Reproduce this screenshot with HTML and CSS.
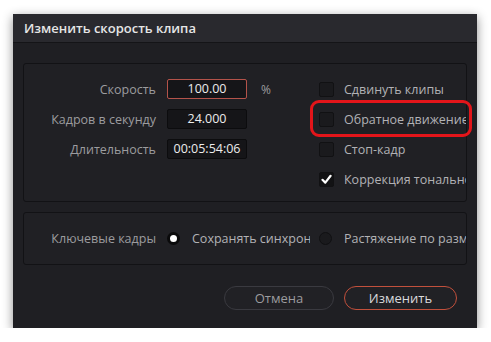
FILE: index.html
```html
<!DOCTYPE html>
<html lang="ru">
<head>
    <meta charset="UTF-8">
    <title>Изменить скорость клипа</title>
    <link rel="stylesheet" href="styles.css">
</head>
<body>
    <div class="dialog">
        <div class="titlebar">Изменить скорость клипа</div>

        <div class="content">
            <div class="panel speed-panel">
                <div class="fields">
                    <div class="field-row">
                        <span class="field-label">Скорость</span>
                        <span class="value-box active">100.00</span>
                        <span class="unit">%</span>
                    </div>
                    <div class="field-row">
                        <span class="field-label">Кадров в секунду</span>
                        <span class="value-box">24.000</span>
                    </div>
                    <div class="field-row">
                        <span class="field-label">Длительность</span>
                        <span class="value-box">00:05:54:06</span>
                    </div>
                </div>

                <div class="options">
                    <div class="check-row">
                        <span class="checkbox"></span>
                        <span class="check-label">Сдвинуть клипы</span>
                    </div>
                    <div class="check-row">
                        <span class="checkbox"></span>
                        <span class="check-label">Обратное движение</span>
                    </div>
                    <div class="check-row">
                        <span class="checkbox"></span>
                        <span class="check-label">Стоп-кадр</span>
                    </div>
                    <div class="check-row">
                        <span class="checkbox checked">
                            <svg width="11" height="11" viewBox="0 0 11 11"><path d="M1.5 5.8 L4.3 8.6 L9.6 1.8" fill="none" stroke="#fff" stroke-width="2.2" stroke-linecap="round" stroke-linejoin="round"/></svg>
                        </span>
                        <span class="check-label">Коррекция тональности</span>
                    </div>
                </div>
            </div>

            <div class="panel keyframe-panel">
                <span class="field-label">Ключевые кадры</span>
                <div class="radio-opt first">
                    <span class="radio selected"></span>
                    <span class="check-label">Сохранять синхронизацию</span>
                </div>
                <div class="radio-opt">
                    <span class="radio"></span>
                    <span class="check-label">Растяжение по размеру</span>
                </div>
            </div>

            <div class="actions">
                <button class="btn cancel">Отмена</button>
                <button class="btn confirm">Изменить</button>
            </div>
        </div>

        <div class="highlight"></div>
    </div>
</body>
</html>
```

FILE: styles.css
```css
body {
    margin: 0;
    padding: 14px 0 0 13px;
    background: #fff;
    font-family: "Open Sans", "Noto Sans", sans-serif;
}
.dialog {
    position: relative;
    width: 464px;
    height: 314px;
    background: #1f1f23;
    box-shadow: 0 3px 10px rgba(0,0,0,0.45);
}
.titlebar {
    height: 28px;
    line-height: 28px;
    padding-left: 11px;
    background: #29292e;
    border-bottom: 1px solid #141417;
    color: #e6e6e6;
    font-size: 13px;
    font-weight: 600;
}
.content {
    padding: 20px 10px 0 10px;
}
.panel {
    background: #202024;
    border: 1px solid #121215;
    border-radius: 3px;
    overflow: hidden;
    box-sizing: border-box;
}
.speed-panel {
    height: 139px;
    padding-top: 10px;
    display: flex;
}
.fields {
    width: 295px;
    flex-shrink: 0;
}
.field-row {
    height: 30px;
    display: flex;
    align-items: center;
}
.field-label {
    width: 132px;
    flex-shrink: 0;
    text-align: right;
    color: #9c9c9f;
    font-size: 12.5px;
}
.value-box {
    width: 80px;
    height: 20px;
    margin-left: 11px;
    box-sizing: border-box;
    background: #151518;
    border: 1px solid #0c0c0e;
    border-radius: 2px;
    color: #ececec;
    font-size: 12.5px;
    line-height: 18px;
    text-align: center;
}
.value-box.active {
    border-color: #b4534a;
}
.unit {
    margin-left: 14px;
    color: #9c9c9f;
    font-size: 12px;
}
.options {
    flex: 1;
    min-width: 0;
}
.check-row {
    height: 30px;
    display: flex;
    align-items: center;
    white-space: nowrap;
}
.checkbox {
    width: 15px;
    height: 15px;
    flex-shrink: 0;
    box-sizing: border-box;
    background: #1a1a1d;
    border: 1px solid #111113;
    border-radius: 2px;
    display: flex;
    align-items: center;
    justify-content: center;
}
.checkbox.checked {
    background: #121214;
}
.check-label {
    margin-left: 10px;
    color: #b2b2b5;
    font-size: 12.5px;
    white-space: nowrap;
}
.keyframe-panel {
    height: 53px;
    margin-top: 10px;
    display: flex;
    align-items: center;
}
.radio-opt {
    display: flex;
    align-items: center;
    white-space: nowrap;
    overflow: hidden;
}
.radio-opt.first {
    width: 143px;
    margin-left: 11px;
    margin-right: 9px;
    flex-shrink: 0;
}
.radio-opt .check-label {
    margin-left: 12px;
}
.radio {
    width: 13px;
    height: 13px;
    flex-shrink: 0;
    border-radius: 50%;
    background: #1a1a1d;
    border: 1px solid #111113;
    box-sizing: border-box;
}
.radio.selected {
    background: #fff;
    border: 3.5px solid #0a0a0b;
}
.actions {
    margin-top: 21px;
    padding-right: 10px;
    display: flex;
    justify-content: flex-end;
    gap: 10px;
}
.btn {
    height: 24px;
    border-radius: 12px;
    background: #212125;
    font-family: inherit;
    font-size: 13px;
    cursor: pointer;
}
.cancel {
    width: 110px;
    border: 1px solid #3a3a40;
    color: #9c9c9f;
}
.confirm {
    width: 113px;
    border: 1px solid #c2503c;
    color: #dadadc;
}
.highlight {
    position: absolute;
    left: 297px;
    top: 86px;
    width: 162px;
    height: 37px;
    box-sizing: border-box;
    border: 3px solid #e3151a;
    border-radius: 9px;
}
```
